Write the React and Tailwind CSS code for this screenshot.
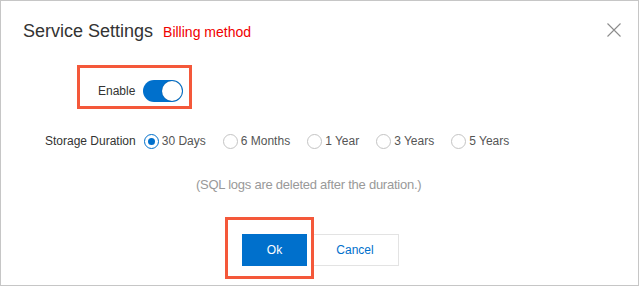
import React from "react";

const durations = ["30 Days", "6 Months", "1 Year", "3 Years", "5 Years"];

function Radio({ checked }) {
  return (
    <span
      className={
        "flex h-[15px] w-[15px] shrink-0 items-center justify-center rounded-full bg-white " +
        (checked ? "border-[1.5px] border-[#0070cc]" : "border border-[#c4c4c4]")
      }
    >
      {checked && <span className="h-[7px] w-[7px] rounded-full bg-[#0070cc]" />}
    </span>
  );
}

export default function App() {
  return (
    <div
      className="relative h-[286px] w-[639px] border border-[#c6c6c6] bg-white text-[#333]"
      style={{ fontFamily: '"Liberation Sans", Arial, sans-serif' }}
    >
      {/* header */}
      <div className="flex items-baseline pl-[22px] pt-[18px]">
        <span className="text-[18px] leading-[24px] text-[#333]">Service Settings</span>
        <span className="ml-[10px] text-[14px] leading-[24px] text-[#f00000]">Billing method</span>
      </div>
      <button className="absolute right-[17px] top-[22px] h-[14px] w-[14px]">
        <svg width="14" height="14" viewBox="0 0 14 14">
          <path d="M0.5 0.5L13.5 13.5M13.5 0.5L0.5 13.5" stroke="#8c8c8c" strokeWidth="1.1" fill="none" />
        </svg>
      </button>

      {/* enable switch */}
      <div className="mt-[36px] flex pl-[97px]">
        <div className="relative flex items-center gap-[8px]">
          <span className="text-[12px] leading-[16px]">Enable</span>
          <span className="relative h-[22px] w-[40px] rounded-full bg-[#0070cc]">
            <span className="absolute right-[1px] top-[1px] h-[20px] w-[20px] rounded-full bg-white shadow-[0_0_1px_rgba(0,0,0,0.4)]" />
          </span>
          <span className="pointer-events-none absolute -bottom-[7px] -left-[21px] -right-[9px] -top-[15px] border-[3px] border-[#f4583a]" />
        </div>
      </div>

      {/* storage duration */}
      <div className="mt-[31px] flex items-center pl-[44px] text-[12px] leading-[16px]">
        <span className="mr-[8px]">Storage Duration</span>
        {durations.map((d, i) => (
          <label key={d} className="mr-[17px] flex items-center">
            <Radio checked={i === 0} />
            <span className="ml-[3px] text-[#555]">{d}</span>
          </label>
        ))}
      </div>

      {/* note */}
      <div className="mt-[26px] pl-[195px] text-[13px] leading-[20px] tracking-[-0.25px] text-[#999]">
        (SQL logs are deleted after the duration.)
      </div>

      {/* buttons */}
      <div className="mt-[39px] flex pl-[241px] text-[12px]">
        <div className="relative">
          <button className="h-[32px] w-[65px] bg-[#0070cc] text-white">Ok</button>
          <span className="pointer-events-none absolute -bottom-[13px] -left-[17px] -right-[7px] -top-[17px] border-[3px] border-[#f4583a]" />
        </div>
        <button className="ml-[4px] h-[32px] w-[88px] border border-[#e3e3e3] bg-white text-[#0070cc]">
          Cancel
        </button>
      </div>
    </div>
  );
}
